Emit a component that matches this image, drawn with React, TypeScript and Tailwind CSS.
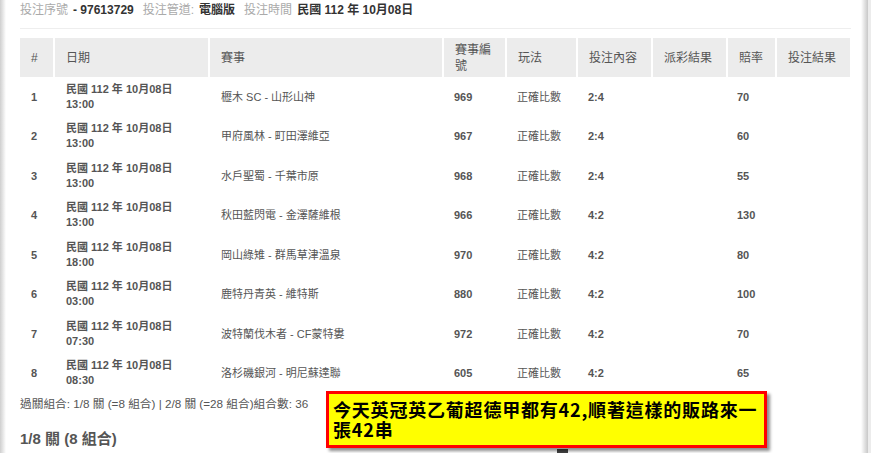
import React from "react";

type Row = {
  no: number;
  time: string;
  match: string;
  code: string;
  pick: string;
  odds: string;
};

const rows: Row[] = [
  { no: 1, time: "13:00", match: "櫪木 SC - 山形山神", code: "969", pick: "2:4", odds: "70" },
  { no: 2, time: "13:00", match: "甲府風林 - 町田澤維亞", code: "967", pick: "2:4", odds: "60" },
  { no: 3, time: "13:00", match: "水戶聖蜀 - 千葉市原", code: "968", pick: "2:4", odds: "55" },
  { no: 4, time: "13:00", match: "秋田藍閃電 - 金澤薩維根", code: "966", pick: "4:2", odds: "130" },
  { no: 5, time: "18:00", match: "岡山綠雉 - 群馬草津溫泉", code: "970", pick: "4:2", odds: "80" },
  { no: 6, time: "03:00", match: "鹿特丹青英 - 維特斯", code: "880", pick: "4:2", odds: "100" },
  { no: 7, time: "07:30", match: "波特蘭伐木者 - CF蒙特婁", code: "972", pick: "4:2", odds: "70" },
  { no: 8, time: "08:30", match: "洛杉磯銀河 - 明尼蘇達聯", code: "605", pick: "4:2", odds: "65" },
];

const headers = [
  { label: "#", w: "w-[34px]" },
  { label: "日期", w: "w-[155px]" },
  { label: "賽事", w: "w-[234px]" },
  { label: "賽事編號", w: "w-[63px]" },
  { label: "玩法", w: "w-[71px]" },
  { label: "投注內容", w: "w-[75px]" },
  { label: "派彩結果", w: "w-[75px]" },
  { label: "賠率", w: "w-[49px]" },
  { label: "投注結果", w: "w-[74px]" },
];

const App = () => {
  return (
    <div
      className="relative flex h-[453px] w-[871px] overflow-hidden bg-white text-[#555]"
      style={{ fontFamily: '"Liberation Sans", "Noto Sans CJK TC", sans-serif' }}
    >
      <div className="w-[6px] shrink-0 bg-gradient-to-r from-[#cfcfcf] to-white" />

      <div className="flex-1 pl-[14px] pr-[10px]">
        <div className="flex h-[29px] items-start border-b border-[#eeeeee] pt-[2px] text-[12px] leading-[16px]">
          <span className="text-[#aaa]">投注序號</span>
          <span className="ml-[5px] font-bold text-[#333]">- 97613729</span>
          <span className="ml-[9px] text-[#aaa]">投注管道:</span>
          <span className="ml-[5px] font-bold text-[#333]">電腦版</span>
          <span className="ml-[9px] text-[#aaa]">投注時間</span>
          <span className="ml-[5px] font-bold text-[#333]">民國 112 年 10月08日</span>
        </div>

        <table className="mt-[9px] w-[830px] table-fixed border-collapse text-[11px]">
          <thead>
            <tr className="h-[39px] bg-[#ececec]">
              {headers.map((h, i) => (
                <th
                  key={i}
                  className={`${h.w} border-r-2 border-white px-[11px] text-left align-middle text-[12px] font-normal leading-[16px] text-[#555] last:border-r-0`}
                >
                  {h.label}
                </th>
              ))}
            </tr>
          </thead>
          <tbody>
            {rows.map((r) => (
              <tr key={r.no} className="h-[39.5px]">
                <td className="px-[11px] font-bold">{r.no}</td>
                <td className="px-[12px] font-bold leading-[15px]">
                  民國 112 年 10月08日
                  <br />
                  {r.time}
                </td>
                <td className="px-[12px]">{r.match}</td>
                <td className="px-[11px] font-bold">{r.code}</td>
                <td className="px-[11px]">正確比數</td>
                <td className="px-[11px] font-bold">{r.pick}</td>
                <td className="px-[11px]"></td>
                <td className="px-[10px] font-bold">{r.odds}</td>
                <td className="px-[11px]"></td>
              </tr>
            ))}
          </tbody>
        </table>

        <div className="mt-[3px] text-[11.7px] leading-[16px]">
          過關組合: 1/8 關 (=8 組合) | 2/8 關 (=28 組合)組合數: 36
        </div>
        <div className="mt-[18px] text-[15px] font-bold leading-[18px]">1/8 關 (8 組合)</div>
      </div>

      <div className="flex w-[10px] shrink-0">
        <div className="w-[7px] bg-gradient-to-r from-white to-[#c8c8c8]" />
        <div className="w-[3px] bg-[#ececec]" />
      </div>

      <div className="absolute left-[557px] top-[449px] h-[4px] w-[11px] bg-[#444]" />

      <div className="absolute left-[326px] top-[391px] w-[441px] border-[3px] border-[#ff0000] bg-[#ffff00] px-[4px] pb-[6px] pt-[5px] shadow-[3px_3px_3px_rgba(0,0,0,0.45)]">
        <p
          className="text-[18px] font-bold leading-[20px] tracking-[0.8px] text-black"
          style={{ fontFamily: '"Noto Sans CJK TC", "Liberation Sans", sans-serif' }}
        >
          今天英冠英乙葡超德甲都有42,順著這樣的販路來一張42串
        </p>
      </div>
    </div>
  );
};

export default App;
